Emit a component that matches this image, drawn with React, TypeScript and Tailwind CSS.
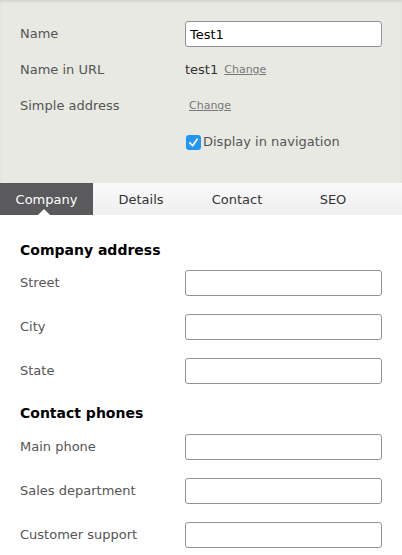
import React from "react";

const font = { fontFamily: '"DejaVu Sans", Verdana, sans-serif' };

function Field({ label }: { label: string }) {
  return (
    <div className="flex items-center h-[26px] mb-[18px]">
      <div className="w-[165px] text-[13px] text-[#555]">{label}</div>
      <input className="w-[197px] h-[26px] border border-[#8e9299] rounded-[3px] bg-white" />
    </div>
  );
}

export default function App() {
  return (
    <div className="w-[402px] h-[555px] overflow-hidden bg-white" style={font}>
      <div className="bg-[#e9e9e4] h-[183px] pl-5 pr-5 pt-[21px] shadow-[inset_0_2px_2px_rgba(0,0,0,0.08)]">
        <div className="flex items-center h-[26px]">
          <div className="w-[165px] text-[13px] text-[#555]">Name</div>
          <input
            defaultValue="Test1"
            className="w-[197px] h-[26px] border border-[#8e9299] rounded-[3px] bg-white px-[4px] text-[13px] text-black"
          />
        </div>
        <div className="flex items-center h-[26px] mt-[10px]">
          <div className="w-[165px] text-[13px] text-[#555]">Name in URL</div>
          <span className="text-[13px] text-[#333]">test1</span>
          <span className="ml-[6px] text-[11px] text-[#777] underline">Change</span>
        </div>
        <div className="flex items-center h-[26px] mt-[10px]">
          <div className="w-[169px] text-[13px] text-[#555]">Simple address</div>
          <span className="text-[11px] text-[#777] underline">Change</span>
        </div>
        <div className="flex items-center h-[26px] mt-[10px] pl-[166px]">
          <span className="w-[15px] h-[15px] rounded-[3px] bg-[#2196f3] flex items-center justify-center">
            <svg width="11" height="11" viewBox="0 0 12 12">
              <path d="M2 6.5 L5 9.5 L10 2.5" stroke="white" strokeWidth="2" fill="none" strokeLinecap="round" strokeLinejoin="round" />
            </svg>
          </span>
          <span className="ml-[2px] text-[13px] text-[#555]">Display in navigation</span>
        </div>
      </div>
      <div className="flex h-[32px] bg-gradient-to-b from-[#fafafa] to-[#efefef] text-[13px] text-[#333]">
        <div className="relative w-[93px] bg-[#5a5a5c] text-white flex items-center justify-center pt-[2px]">
          Company
          <div className="absolute bottom-0 left-[38px] w-0 h-0 border-l-[6px] border-r-[6px] border-b-[6px] border-l-transparent border-r-transparent border-b-white" />
        </div>
        <div className="w-[96px] flex items-center justify-center pt-[2px]">Details</div>
        <div className="w-[96px] flex items-center justify-center pt-[2px]">Contact</div>
        <div className="w-[96px] flex items-center justify-center pt-[2px]">SEO</div>
      </div>
      <div className="px-5 pt-[25px]">
        <div className="text-[14px] font-bold text-black leading-[20px] mb-[10px]">Company address</div>
        <Field label="Street" />
        <Field label="City" />
        <Field label="State" />
        <div className="text-[14px] font-bold text-black leading-[20px] pt-[1px] mb-[11px]">Contact phones</div>
        <Field label="Main phone" />
        <Field label="Sales department" />
        <Field label="Customer support" />
      </div>
    </div>
  );
}
